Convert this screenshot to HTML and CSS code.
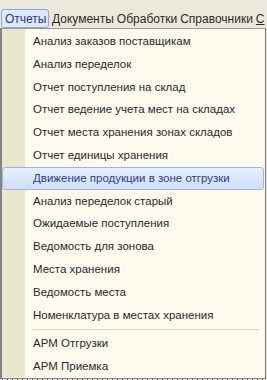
FILE: index.html
```html
<!doctype html>
<html>
<head>
    <meta charset="utf-8">
    <link rel="stylesheet" href="styles.css">
</head>
<body>
<div class="menubar">
    <span class="top active">Отчеты</span>
    <span class="top">Документы</span>
    <span class="top">Обработки</span>
    <span class="top">Справочники</span>
    <span class="top"><u>С</u></span>
</div>
<div class="dropdown">
    <div class="item">Анализ заказов поставщикам</div>
    <div class="item">Анализ переделок</div>
    <div class="item">Отчет поступления на склад</div>
    <div class="item">Отчет ведение учета мест на складах</div>
    <div class="item">Отчет места хранения зонах складов</div>
    <div class="item">Отчет единицы хранения</div>
    <div class="item hover">Движение продукции в зоне отгрузки</div>
    <div class="item">Анализ переделок старый</div>
    <div class="item">Ожидаемые поступления</div>
    <div class="item">Ведомость для зонова</div>
    <div class="item">Места хранения</div>
    <div class="item">Ведомость места</div>
    <div class="item">Номенклатура в местах хранения</div>
    <div class="sep"></div>
    <div class="item">АРМ Отгрузки</div>
    <div class="item">АРМ Приемка</div>
</div>
<div class="under"></div>
</body>
</html>
```
FILE: styles.css
```css
body {
    margin: 0;
    background: #ece9dc;
    font: 11.5px 'Liberation Sans', Arial, sans-serif;
    color: #2a2a2a;
    overflow: hidden;
}

.menubar {
    display: flex;
    padding: 9px 0 0 1px;
    height: 19px;
    font-size: 12px;
    white-space: nowrap;
    overflow: hidden;
}
.top {
    padding: 2px 1.5px 0 1.5px;
    line-height: 16px;
}
.top.active {
    border: 1px solid #8aa4dc;
    border-radius: 3px;
    background: #dfe8fb;
    color: #2b3a8e;
    padding: 1px 2px 0 3px;
    margin-right: 1px;
}

.dropdown {
    width: 263px;
    border-left: 2px solid #858585;
    border-right: 1px solid #777;
    border-top: 1px solid #9a9a9a;
    border-bottom: 1px solid #8a8a8a;
    background: linear-gradient(to right, #ebe6cf 23px, #fffbee 23px);
    padding: 1px 0 0 0;
}
.item {
    height: 22.8px;
    line-height: 22.8px;
    padding-left: 31px;
    white-space: nowrap;
}
.item.hover {
    padding-left: 30px;
    width: 230px;
    border: 1px solid #9db5ec;
    border-radius: 3px;
    background: linear-gradient(#e6effd, #cfe0fb);
    color: #333b86;
    line-height: 20.8px;
    height: 20.8px;
}
.sep {
    height: 1px;
    margin: 3px 6px 2px 31px;
    background: #ddd6bf;
}

.under {
    height: 4px;
    background: repeating-linear-gradient(to right, #ece9dc 0 2px, #3a3a3a 2px 3px, #ece9dc 3px 5px);
}
```
